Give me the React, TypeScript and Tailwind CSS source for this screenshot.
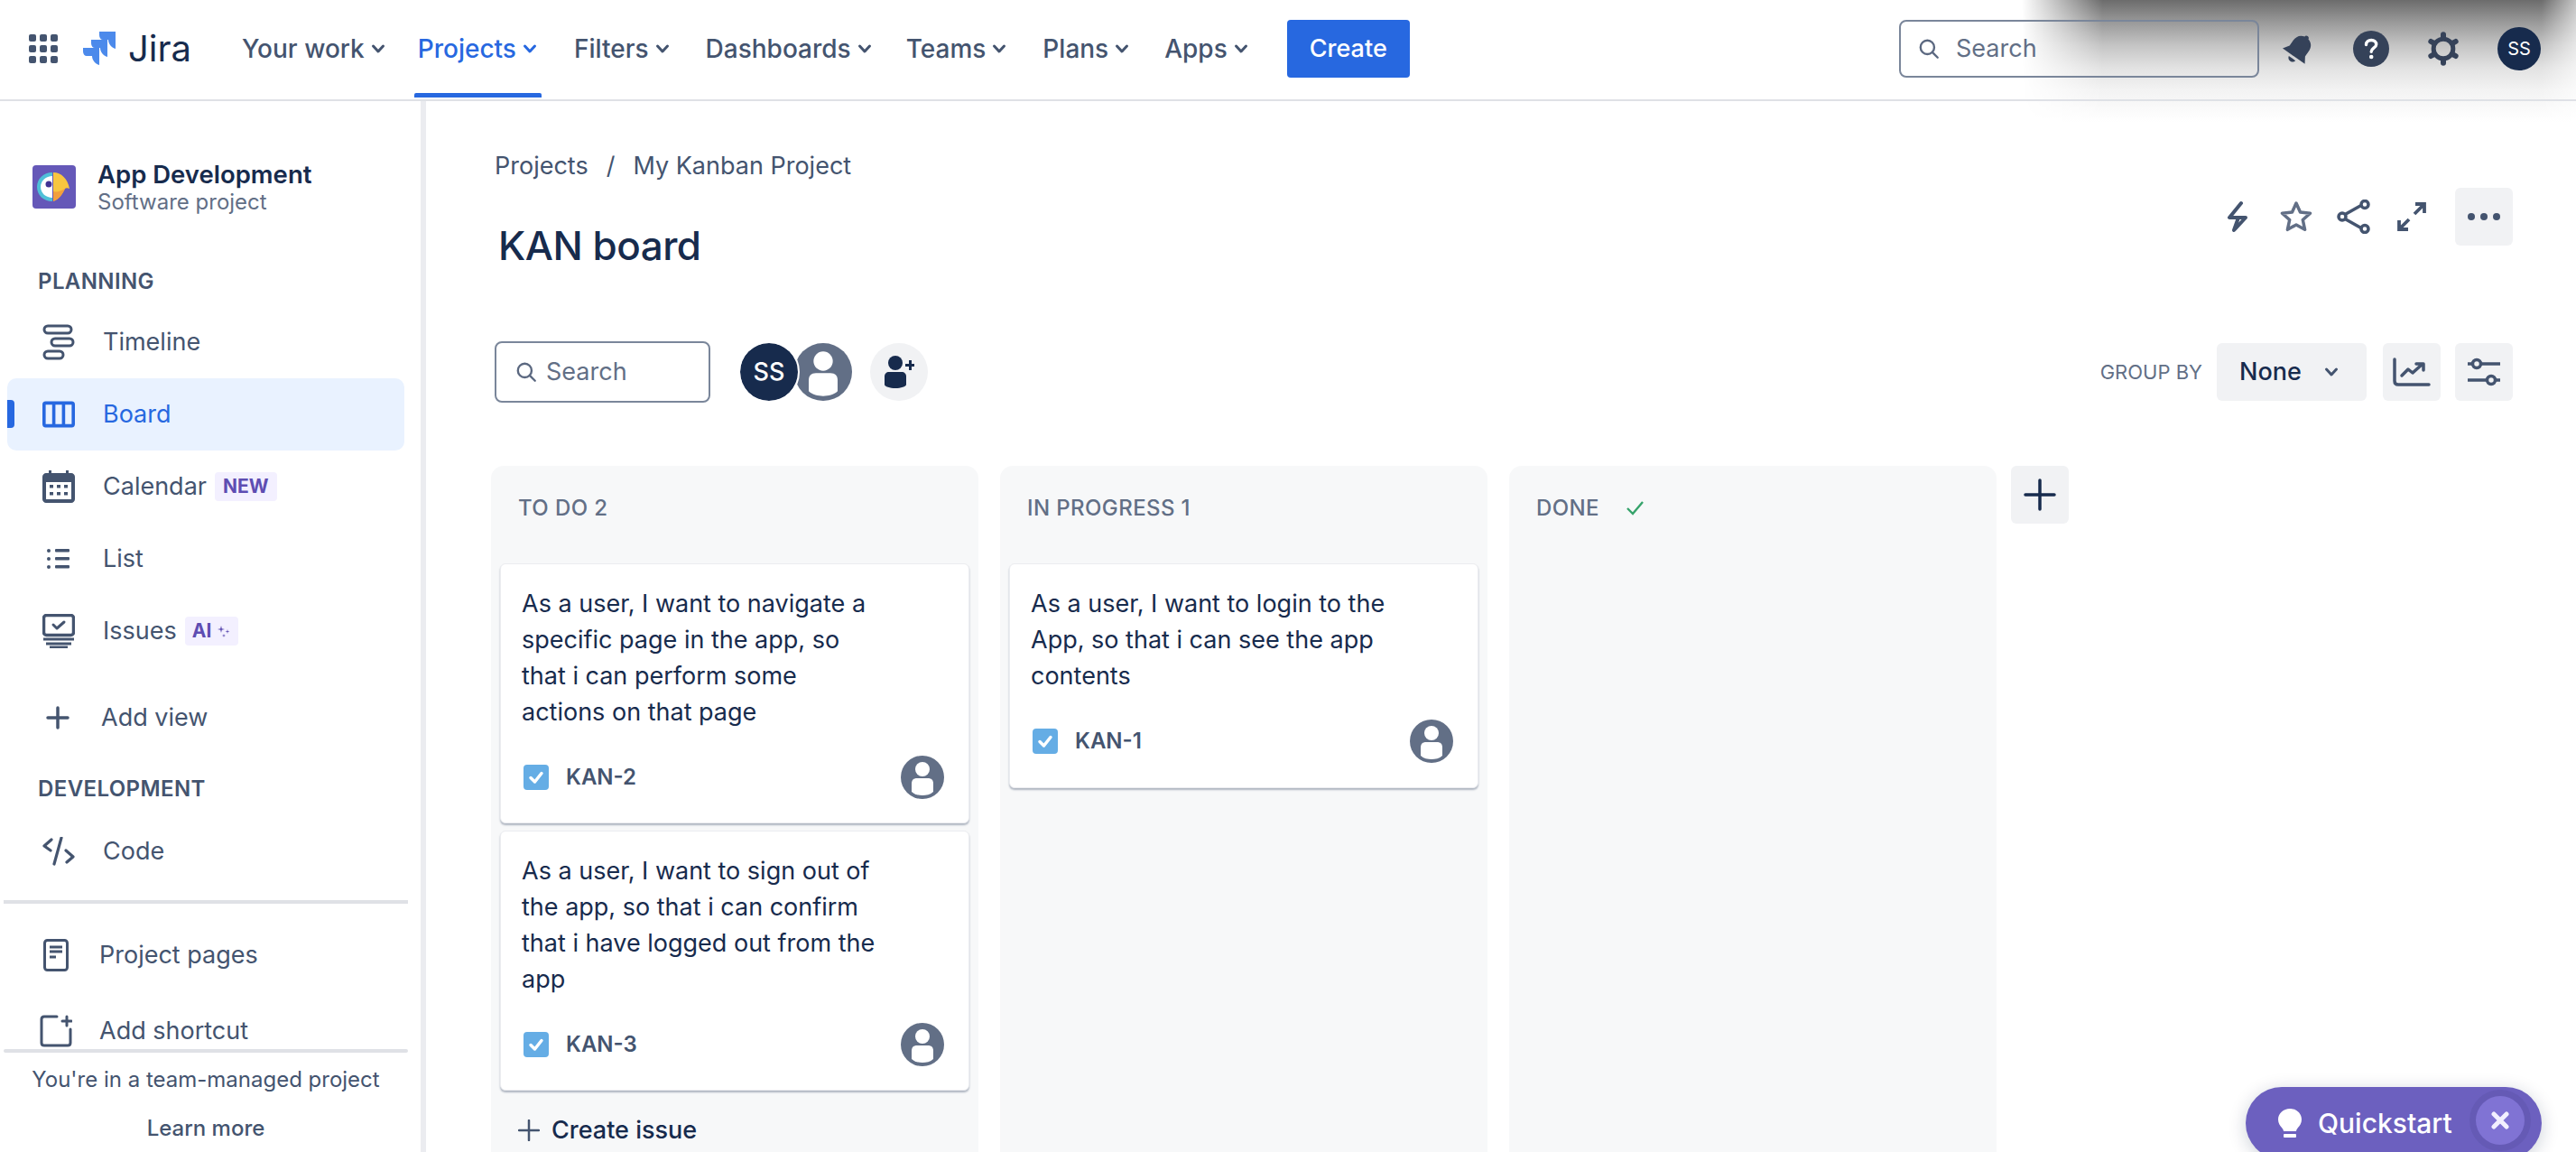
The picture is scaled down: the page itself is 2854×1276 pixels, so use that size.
import React from "react";

const Chev = ({ c = "#44546f", s = 16 }: { c?: string; s?: number }) => (
  <svg width={s} height={s} viewBox="0 0 16 16" fill="none">
    <path d="M2.5 5l5.5 6 5.5-6" stroke={c} strokeWidth="3" strokeLinecap="round" strokeLinejoin="round" />
  </svg>
);

const NavItem = ({ label, active, className }: { label: string; active?: boolean; className: string }) => (
  <div className={`relative flex h-full items-center gap-[7px] ${className} ${active ? "text-[#2768e0]" : "text-[#44546f]"}`}>
    <span className="text-[28px] font-medium">{label}</span>
    <Chev c={active ? "#2768e0" : "#44546f"} />
    {active && <div className="absolute -left-[4px] -right-[5px] bottom-0 h-[5px] rounded-t-[2px] bg-[#2768e0]" />}
  </div>
);

const Waffle = () => (
  <svg width="32" height="32" viewBox="0 0 32 32" fill="#44546f">
    {[0, 12, 24].flatMap((y) =>
      [0, 12, 24].map((x) => <rect key={`${x}-${y}`} x={x} y={y} width="8" height="8" rx="2" />)
    )}
  </svg>
);

const piece = "M0 0H18V19C14 18 10 14 10 9H4C2 9 0 7 0 4z";
const JiraMark = () => (
  <svg width="37" height="38" viewBox="0 0 37 38" fill="#4c8aeb">
    <path d={piece} transform="translate(19 0)" />
    <path d={piece} transform="translate(10 9)" />
    <path d={piece} transform="translate(1 18)" />
  </svg>
);

const SearchIcon = ({ s = 26 }: { s?: number }) => (
  <svg width={s} height={s} viewBox="0 0 24 24" fill="none" stroke="#5b6880" strokeWidth="2.2" strokeLinecap="round">
    <circle cx="10.500" cy="10.500" r="7" />
    <path d="M15.800 15.800L21 21" />
  </svg>
);

const Bell = () => (
  <svg width="40" height="40" viewBox="0 0 40 40" fill="#354259">
    <g transform="rotate(35 20 20)">
      <path d="M20 3c-1.500 0-2.500 1-2.500 2.300C12 6.500 9.500 11 9.500 16v7L5 30h30l-4.500-7v-7c0-5-2.500-9.500-8-10.700C22.500 4 21.500 3 20 3z" />
      <path d="M15.500 33a4.600 4.600 0 0 0 9 0z" />
    </g>
  </svg>
);

const Help = () => (
  <svg width="40" height="40" viewBox="0 0 40 40">
    <circle cx="20" cy="20" r="20" fill="#354259" />
    <path d="M14.500 15.500c0-3.200 2.500-5 5.700-5 3.300 0 5.500 2 5.500 4.700 0 4-5.500 4-5.500 8" fill="none" stroke="#fff" strokeWidth="3.400" strokeLinecap="round" />
    <circle cx="20.200" cy="29" r="2.300" fill="#fff" />
  </svg>
);

const Gear = () => (
  <svg width="40" height="40" viewBox="0 0 24 24" fill="none" stroke="#354259" strokeWidth="3" strokeLinejoin="round">
    <circle cx="12" cy="12" r="6.500" />
    <path strokeWidth="3.600" strokeLinecap="round" d="M12 2.500v2M12 19.500v2M3.800 7.200l1.800 1M18.400 15.800l1.800 1M3.800 16.800l1.800-1M18.400 8.200l1.800-1" />
  </svg>
);

const Parrot = () => (
  <div className="flex h-[48px] w-[48px] shrink-0 items-center justify-center rounded-[4px] bg-[#6558b8]">
    <svg width="40" height="34" viewBox="0 0 40 34">
      <path d="M18 1C8 1 1 8 1 17s7 16 17 16z" fill="#4fc0d8" />
      <path d="M18 5C11 5 5 10 5 17s6 12 13 12z" fill="#fff" />
      <circle cx="14" cy="14" r="3.500" fill="#403294" />
      <path d="M19 1c9 0 16 7 18 18-2-1-4-1-5 0-3 6-7 12-13 14z" fill="#f8c63f" />
      <path d="M19 33V22c4 1 8 0 13-3-3 7-7 12-13 14z" fill="#f29f3c" />
    </svg>
  </div>
);

const ic = { fill: "none", stroke: "#44546f", strokeWidth: 3, strokeLinecap: "round" as const, strokeLinejoin: "round" as const };

const TimelineI = () => (
  <svg width="36" height="40" viewBox="0 0 36 40" {...ic}>
    <rect x="2" y="2" width="30" height="8" rx="4" />
    <rect x="10" y="16" width="24" height="8" rx="4" />
    <rect x="2" y="30" width="21" height="8" rx="4" />
  </svg>
);
const BoardI = () => (
  <svg width="40" height="32" viewBox="0 0 40 32" fill="none" stroke="#2768e0" strokeWidth="4">
    <rect x="2" y="2" width="36" height="28" rx="2" />
    <path d="M14 2v28M26 2v28" />
  </svg>
);
const CalendarI = () => (
  <svg width="36" height="36" viewBox="0 0 36 36" fill="#44546f">
    <path d="M7 0h3v3h16V0h3v3h3c2 0 4 2 4 4v25c0 2-2 4-4 4H4c-2 0-4-2-4-4V7c0-2 2-4 4-4h3zM4 13v19h28V13z" />
    {[8, 16, 24].map((x) => (
      <React.Fragment key={x}>
        <rect x={x} y="16" width="4" height="3.500" />
        <rect x={x} y="24" width="4" height="3.500" />
      </React.Fragment>
    ))}
  </svg>
);
const ListI = () => (
  <svg width="26" height="22" viewBox="0 0 26 22" fill="#44546f">
    {[0, 9, 18].map((y) => (
      <React.Fragment key={y}>
        <circle cx="2" cy={y + 2} r="2" />
        <rect x="9" y={y} width="16" height="3.500" rx="1" />
      </React.Fragment>
    ))}
  </svg>
);
const IssuesI = () => (
  <svg width="36" height="38" viewBox="0 0 36 38" fill="none" stroke="#44546f">
    <rect x="1.500" y="1.500" width="33" height="22" rx="3" strokeWidth="3.500" />
    <path d="M12 12l4 4 8-7" strokeWidth="3" strokeLinecap="round" strokeLinejoin="round" />
    <path d="M1 28h34M4 33h28M8 37h20" strokeWidth="3" />
  </svg>
);
const CodeI = () => (
  <svg width="36" height="32" viewBox="0 0 36 32" {...ic} strokeWidth={3.200}>
    <path d="M10 3L2 10l7 5M26 15l8 7-7 6M21 1L13 30" />
  </svg>
);
const PageI = () => (
  <svg width="28" height="36" viewBox="0 0 28 36" fill="none" stroke="#44546f">
    <rect x="1.500" y="1.500" width="25" height="33" rx="3" strokeWidth="3" />
    <path d="M7 9h14M7 14h14M7 20h7" strokeWidth="2.800" />
  </svg>
);
const ShortcutI = () => (
  <svg width="36" height="36" viewBox="0 0 36 36" fill="none" stroke="#44546f" strokeWidth="3" strokeLinecap="round">
    <path d="M19 2H5C3 2 2 3 2 5v26c0 2 1 3 3 3h26c2 0 3-1 3-3V16" />
    <path d="M30 2v10M25 7h10" />
  </svg>
);

const SideRow = ({ icon, label, active, badge }: { icon: React.ReactNode; label: string; active?: boolean; badge?: React.ReactNode }) => (
  <div className={`relative ml-[8px] flex h-[80px] w-[440px] items-center rounded-[10px] ${active ? "bg-[#e9f2ff] text-[#2768e0]" : "text-[#44546f]"}`}>
    {active && <div className="absolute left-0 top-[24px] h-[31px] w-[8px] rounded-r-[4px] bg-[#2768e0]" />}
    <div className="flex w-[106px] shrink-0 items-center justify-center pl-[39px] pr-[31px]">{icon}</div>
    <span className="text-[27px]">{label}</span>
    {badge}
  </div>
);

const Person = ({ s }: { s: number }) => (
  <svg width={s} height={s} viewBox="0 0 48 48" className="shrink-0">
    <circle cx="24" cy="24" r="24" fill="#626f86" />
    <circle cx="24" cy="15" r="8" fill="#fff" />
    <path d="M12 31c0-4 2-6 6-6h12c4 0 6 2 6 6v9c-3 3-8 4-12 4s-9-1-12-4z" fill="#fff" />
  </svg>
);

const Story = () => (
  <svg width="28" height="28" viewBox="0 0 28 28" className="shrink-0">
    <rect width="28" height="28" rx="4" fill="#65ade5" />
    <path d="M8 14.500l4.500 4.500L20 9.500" fill="none" stroke="#fff" strokeWidth="3.500" strokeLinecap="round" strokeLinejoin="round" />
  </svg>
);

const Card = ({ lines, id, h }: { lines: string[]; id: string; h: string }) => (
  <div className={`flex flex-col rounded-[6px] border border-[#ebecf0] bg-white pl-[23px] pr-[27px] pt-[24px] shadow-[0_2px_2px_rgba(9,30,66,0.3)] ${h}`}>
    <div className="text-[27px] leading-[40px] text-[#172b4d]">
      {lines.map((l) => (
        <div key={l} className="whitespace-nowrap">{l}</div>
      ))}
    </div>
    <div className="mt-[28px] flex h-[48px] items-center pl-[2px]">
      <Story />
      <span className="ml-[19px] text-[24px] font-semibold text-[#44546f]">{id}</span>
      <div className="flex-1" />
      <Person s={48} />
    </div>
  </div>
);

const Col = ({ title, children }: { title: React.ReactNode; children?: React.ReactNode }) => (
  <div className="flex h-[800px] w-[540px] shrink-0 flex-col gap-[8px] rounded-t-[14px] bg-[#f7f8f9] px-[10px]">
    <div className="flex h-[100px] shrink-0 items-center pb-[6px] pl-[20px] text-[24px] font-medium tracking-[0.4px] text-[#626f86]">{title}</div>
    {children}
  </div>
);

const TopIcon = ({ children, bg, className = "" }: { children: React.ReactNode; bg?: boolean; className?: string }) => (
  <div className={`flex h-[64px] w-[64px] items-center justify-center rounded-[6px] ${bg ? "bg-[#f1f2f4]" : ""} ${className}`}>{children}</div>
);

export default function App() {
  return (
    <div className="relative isolate flex h-[1276px] w-[2854px] flex-col overflow-hidden bg-white font-['Inter',sans-serif]">
      <div className="pointer-events-none absolute left-[2240px] top-0 -z-10 h-[140px] w-[640px] bg-[linear-gradient(to_bottom,#6c6c6c,#9a9a9a_25px,#c4c4c4_50px,#e2e2e2_75px,#f3f3f3_100px,#ffffff_135px)] [mask-image:linear-gradient(to_right,transparent,black_14%,black_90%,transparent)]" />
      <header className="relative flex h-[112px] shrink-0 items-center border-b-2 border-[#dfe1e6] pb-[2px] pr-[39px]">
        <div className="ml-[32px] flex items-center"><Waffle /></div>
        <div className="ml-[27px] flex items-center gap-[14px]">
          <JiraMark />
          <span className="text-[40px] font-normal leading-none text-[#172b4d]">Jira</span>
        </div>
        <NavItem label="Your work" className="ml-[56px]" />
        <NavItem label="Projects" active className="ml-[36px]" />
        <NavItem label="Filters" className="ml-[41px]" />
        <NavItem label="Dashboards" className="ml-[40px]" />
        <NavItem label="Teams" className="ml-[38px]" />
        <NavItem label="Plans" className="ml-[40px]" />
        <NavItem label="Apps" className="ml-[39px]" />
        <button className="ml-[43px] flex h-[64px] w-[136px] items-center justify-center rounded-[4px] bg-[#2768e0] text-[27px] font-medium text-white">Create</button>
        <div className="flex-1" />
        <div className="flex h-[64px] w-[399px] items-center gap-[17px] rounded-[8px] border-2 border-[#7a869a] pl-[18px] text-[27px] text-[#626f86]">
          <SearchIcon />
          Search
        </div>
        <div className="ml-[24px] flex items-center gap-[40px]">
          <Bell />
          <Help />
          <Gear />
          <div className="flex h-[48px] w-[48px] items-center justify-center rounded-full bg-[#172b4d] text-[20px] text-white">SS</div>
        </div>
      </header>

      <div className="flex min-h-0 flex-1">
        <aside className="relative flex w-[472px] shrink-0 flex-col border-r-[6px] border-[#ebecf0]">
          <div className="ml-[36px] mt-[71px] flex h-[48px] items-center gap-[24px]">
            <Parrot />
            <div className="flex flex-col">
              <span className="text-[27.500px] font-semibold leading-[34px] text-[#172b4d]">App Development</span>
              <span className="text-[24px] leading-[28px] text-[#626f86]">Software project</span>
            </div>
          </div>
          <div className="ml-[42px] mt-[66px] text-[24px] font-semibold leading-[30px] tracking-[0.4px] text-[#44546f]">PLANNING</div>
          <div className="mt-[12px]">
            <SideRow icon={<TimelineI />} label="Timeline" />
            <SideRow active icon={<BoardI />} label="Board" />
            <SideRow icon={<CalendarI />} label="Calendar" badge={<span className="ml-[9px] flex h-[32px] items-center rounded-[4px] bg-[#f3f0ff] px-[9px] text-[21px] font-bold text-[#5e4db2]">NEW</span>} />
            <SideRow icon={<ListI />} label="List" />
            <SideRow
              icon={<IssuesI />}
              label="Issues"
              badge={
                <span className="ml-[9px] flex h-[32px] items-center gap-[6px] rounded-[4px] bg-[#f3f0ff] px-[8px] text-[21px] font-bold text-[#5e4db2]">
                  AI
                  <svg width="16" height="16" viewBox="0 0 16 16" fill="#5e4db2"><path d="M5 2l.8 3.200L9 6 5.800 6.800 5 10l-.8-3.200L1 6l3.200-.8zM12 6l.5 2 2 .5-2 .5-.5 2-.5-2-2-.5 2-.5zM8 11l.4 1.600 1.600.4-1.600.4L8 15l-.4-1.600L6 13l1.600-.4z" /></svg>
                </span>
              }
            />
          </div>
          <div className="relative mt-[36px] flex h-[40px] items-center pl-[51px] text-[27px] text-[#44546f]">
            <svg width="26" height="26" viewBox="0 0 26 26" fill="none" stroke="#44546f" strokeWidth="3.500" strokeLinecap="round"><path d="M13 2v22M2 13h22" /></svg>
            <span className="ml-[35px]">Add view</span>
          </div>
          <div className="ml-[42px] mt-[44px] text-[24px] font-semibold leading-[30px] tracking-[0.4px] text-[#44546f]">DEVELOPMENT</div>
          <div className="mt-[14px]">
            <SideRow icon={<CodeI />} label="Code" />
          </div>
          <div className="ml-[4px] mt-[14px] h-[4px] w-[448px] bg-[#dfe1e6]" />
          <div className="mt-[37px] flex h-[40px] items-center pl-[48px] text-[27px] text-[#44546f]">
            <PageI />
            <span className="ml-[34px]">Project pages</span>
          </div>
          <div className="mt-[44px] flex h-[40px] items-center pl-[44px] text-[27px] text-[#44546f]">
            <ShortcutI />
            <span className="ml-[30px]">Add shortcut</span>
          </div>
          <div className="ml-[4px] h-[4px] w-[448px] rounded-full bg-[#dfe1e6]" />
          <div className="ml-[4px] mt-[15px] w-[448px] text-center text-[24px] leading-[30px] text-[#44546f]">You're in a team-managed project</div>
          <div className="ml-[4px] mt-[24px] w-[448px] text-center text-[24px] font-medium leading-[30px] text-[#44546f]">Learn more</div>
        </aside>

        <main className="flex min-w-0 flex-1 flex-col overflow-hidden pl-[76px] pr-[70px]">
          <div className="mt-[56px] flex h-[32px] items-center text-[27px] text-[#44546f]">
            <span>Projects</span>
            <span className="mx-[20px]">/</span>
            <span>My Kanban Project</span>
          </div>
          <div className="mt-[40px] flex h-[64px] items-center justify-between">
            <h1 className="ml-[4px] text-[44px] font-medium tracking-[-0.5px] text-[#172b4d]">KAN board</h1>
            <div className="-mt-[64px] flex items-center">
              <TopIcon>
                <svg width="26" height="36" viewBox="0 0 26 36" {...ic} strokeWidth={4}><path d="M16 3L3 19h18L8 33l5-14" /></svg>
              </TopIcon>
              <TopIcon>
                <svg width="36" height="36" viewBox="0 0 36 36" fill="none" stroke="#626f86" strokeWidth="3.500" strokeLinejoin="round"><path d="M18 3l4.500 10 11 1.200-8.200 7.300 2.300 10.800L18 27l-9.600 5.300 2.300-10.800L2.500 14.200l11-1.200z" /></svg>
              </TopIcon>
              <TopIcon>
                <svg width="38" height="38" viewBox="0 0 38 38" {...ic} strokeWidth={3.500}>
                  <path d="M10 16L26 7M10 22l16 9" />
                  <circle cx="6" cy="19" r="4" fill="#fff" />
                  <circle cx="31" cy="5.500" r="4" fill="#fff" />
                  <circle cx="31" cy="32.500" r="4" fill="#fff" />
                </svg>
              </TopIcon>
              <TopIcon>
                <svg width="34" height="34" viewBox="0 0 34 34" {...ic} strokeWidth={3.800} strokeLinecap="butt" strokeLinejoin="miter">
                  <path d="M20 14L31 3M21 3h10v10M14 20L3 31M3 21v10h10" />
                </svg>
              </TopIcon>
              <TopIcon bg className="ml-[16px]">
                <svg width="36" height="8" viewBox="0 0 36 8" fill="#44546f"><circle cx="4" cy="4" r="4" /><circle cx="18" cy="4" r="4" /><circle cx="32" cy="4" r="4" /></svg>
              </TopIcon>
            </div>
          </div>
          <div className="mt-[74px] flex h-[68px] items-center">
            <div className="flex h-[68px] w-[239px] items-center gap-[9px] rounded-[8px] border-2 border-[#7a869a] pl-[20px] text-[27px] text-[#626f86]">
              <SearchIcon />
              Search
            </div>
            <div className="ml-[33px] flex items-center">
              <div className="relative z-10 flex h-[64px] w-[64px] items-center justify-center rounded-full bg-[#172b4d] text-[27px] font-medium text-white outline-2 outline-white">SS</div>
              <div className="-ml-[4px]"><Person s={64} /></div>
            </div>
            <div className="ml-[20px] flex h-[64px] w-[64px] items-center justify-center rounded-full bg-[#f1f2f4]">
              <svg width="34" height="38" viewBox="0 0 34 38" fill="#172b4d">
                <circle cx="13" cy="9" r="8" />
                <path d="M1 24c0-3 2-5 5-5h14c3 0 5 2 5 5v9c0 2-6 4-12 4S1 35 1 33z" />
                <path d="M24 10h4V6h3v4h3v3h-3v4h-3v-4h-4z" />
              </svg>
            </div>
            <div className="flex-1" />
            <span className="text-[22px] text-[#626f86]">GROUP BY</span>
            <div className="ml-[16px] flex h-[64px] w-[166px] items-center rounded-[6px] bg-[#f1f2f4] pl-[25px] text-[27px] font-medium text-[#172b4d]">
              None
              <span className="ml-[25px]"><Chev /></span>
            </div>
            <div className="ml-[18px] flex h-[64px] w-[64px] items-center justify-center rounded-[6px] bg-[#f1f2f4]">
              <svg width="42" height="32" viewBox="0 0 42 32" {...ic} strokeWidth={3.500}>
                <path d="M2 2v24c0 2 1 4 4 4h34M10 20l7-7 5 4 10-9M26 7h8v7" />
              </svg>
            </div>
            <div className="ml-[16px] flex h-[64px] w-[64px] items-center justify-center rounded-[6px] bg-[#f1f2f4]">
              <svg width="36" height="32" viewBox="0 0 36 32" fill="none" stroke="#44546f" strokeWidth="3.500">
                <path d="M0 7h36M0 25h36" />
                <circle cx="10" cy="7" r="4.500" fill="#f1f2f4" />
                <circle cx="26" cy="25" r="4.500" fill="#f1f2f4" />
              </svg>
            </div>
          </div>
          <div className="-ml-[4px] mt-[70px] flex items-start gap-[24px]">
            <Col title="TO DO 2">
              <Card h="h-[288px]" id="KAN-2" lines={["As a user, I want to navigate a", "specific page in the app, so", "that i can perform some", "actions on that page"]} />
              <Card h="h-[288px]" id="KAN-3" lines={["As a user, I want to sign out of", "the app, so that i can confirm", "that i have logged out from the", "app"]} />
              <div className="ml-[20px] mt-[16px] flex items-center gap-[13px] text-[27px] font-medium text-[#172b4d]">
                <svg width="24" height="24" viewBox="0 0 24 24" fill="none" stroke="#44546f" strokeWidth="2.500" strokeLinecap="round"><path d="M12 1v22M1 12h22" /></svg>
                Create issue
              </div>
            </Col>
            <Col title="IN PROGRESS 1">
              <Card h="h-[249px]" id="KAN-1" lines={["As a user, I want to login to the", "App, so that i can see the app", "contents"]} />
            </Col>
            <Col
              title={
                <span className="flex items-center gap-[30px]">
                  DONE
                  <svg width="20" height="18" viewBox="0 0 20 18" fill="none" stroke="#36a36b" strokeWidth="2.400"><path d="M1 9l6 6L18 2" /></svg>
                </span>
              }
            />
            <div className="-ml-[8px] flex h-[64px] w-[64px] shrink-0 items-center justify-center rounded-[6px] bg-[#f1f2f4]">
              <svg width="36" height="36" viewBox="0 0 36 36" fill="none" stroke="#172b4d" strokeWidth="3.500" strokeLinecap="round"><path d="M18 2v32M2 18h32" /></svg>
            </div>
          </div>
        </main>
      </div>

      <div className="absolute left-[2488px] top-[1204px] flex h-[80px] w-[328px] items-center rounded-full bg-[#6c60bf] pl-[36px] text-white shadow-[0_4px_20px_rgba(9,30,66,0.2)]">
        <svg width="26" height="32" viewBox="0 0 26 32" fill="#fff">
          <path d="M13 0c7 0 13 5 13 12 0 4-2 7-4 9-1 1-2 3-2 4H6c0-1-1-3-2-4-2-2-4-5-4-9C0 5 6 0 13 0z" />
          <rect x="6" y="28" width="14" height="4" rx="1" />
        </svg>
        <span className="ml-[18px] text-[30px] font-medium">Quickstart</span>
        <div className="absolute left-[248px] top-[3px] flex h-[68px] w-[68px] items-center justify-center rounded-full bg-[#655ab5]">
          <div className="flex h-[54px] w-[54px] items-center justify-center rounded-full bg-[#8073d4]">
            <svg width="20" height="20" viewBox="0 0 20 20" fill="none" stroke="#f3f0ff" strokeWidth="5" strokeLinecap="round"><path d="M3 3l14 14M17 3L3 17" /></svg>
          </div>
        </div>
      </div>
    </div>
  );
}
